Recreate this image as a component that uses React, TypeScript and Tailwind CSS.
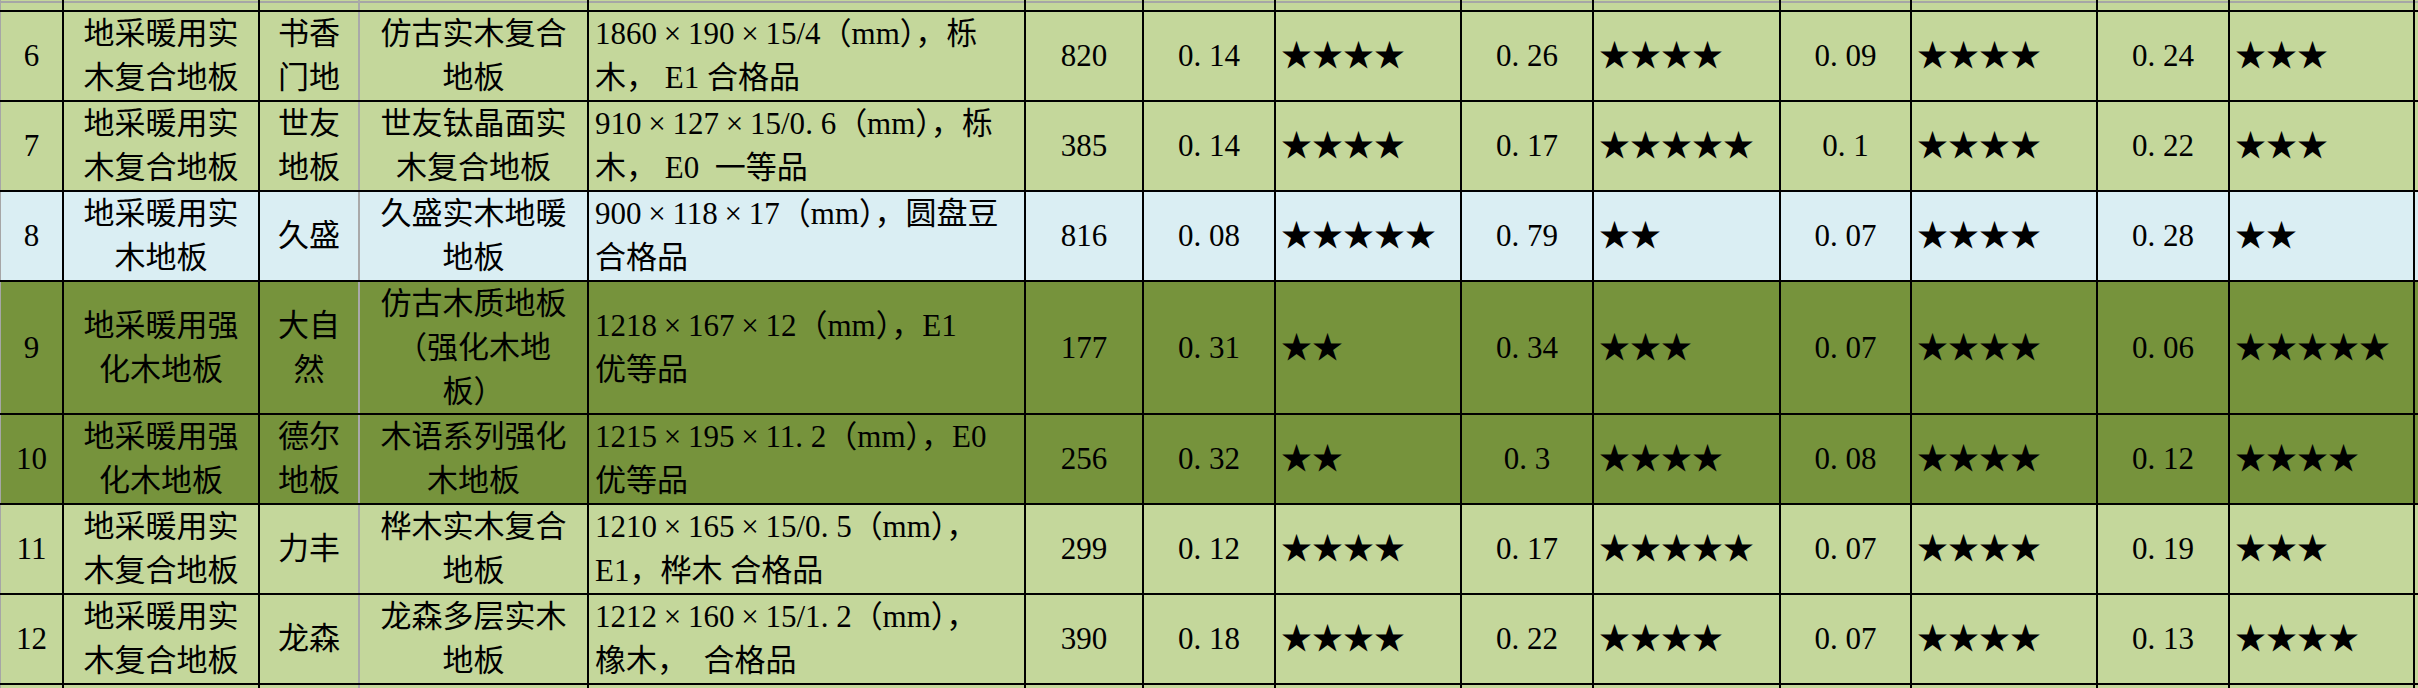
import React from 'react'

type Row = {
  bg: string
  h: string
  no: string
  cat: string[]
  brand: string[]
  name: string[]
  spec: string[]
  price: string
  vals: [string, number][]
}

// column widths include the 2px right rule
const COLS = [
  { w: 'w-[64px] border-l border-l-[#a6a6a6]', line: 'border-black', align: 'items-center text-center' },
  { w: 'w-[196px]', line: 'border-black', align: 'items-center text-center' },
  { w: 'w-[100px]', line: 'border-[#a9a9a9]', align: 'items-center text-center' },
  { w: 'w-[229px]', line: 'border-black', align: 'items-center text-center' },
  { w: 'w-[437px]', line: 'border-black', align: 'items-start pl-[6px]' },
  { w: 'w-[118px]', line: 'border-black', align: 'items-center text-center' },
  { w: 'w-[132px]', line: 'border-black', align: 'items-center text-center' },
  { w: 'w-[186px]', line: 'border-black', align: 'items-start pl-[5px]' },
  { w: 'w-[132px]', line: 'border-black', align: 'items-center text-center' },
  { w: 'w-[187px]', line: 'border-black', align: 'items-start pl-[5px]' },
  { w: 'w-[131px]', line: 'border-black', align: 'items-center text-center' },
  { w: 'w-[186px]', line: 'border-black', align: 'items-start pl-[5px]' },
  { w: 'w-[132px]', line: 'border-black', align: 'items-center text-center' },
  { w: 'w-[185px]', line: 'border-black', align: 'items-start pl-[5px]' },
]

const LIGHT = 'bg-[#c4d79b]'
const BLUE = 'bg-[#daeef3]'
const DARK = 'bg-[#76933c]'

const rows: Row[] = [
  {
    bg: LIGHT, h: 'h-[90px]', no: '6',
    cat: ['地采暖用实', '木复合地板'], brand: ['书香', '门地'], name: ['仿古实木复合', '地板'],
    spec: ['1860×190×15/4（mm），栎', '木， E1 合格品'], price: '820',
    vals: [['0.14', 4], ['0.26', 4], ['0.09', 4], ['0.24', 3]],
  },
  {
    bg: LIGHT, h: 'h-[90px]', no: '7',
    cat: ['地采暖用实', '木复合地板'], brand: ['世友', '地板'], name: ['世友钛晶面实', '木复合地板'],
    spec: ['910×127×15/0.6（mm），栎', '木， E0  一等品'], price: '385',
    vals: [['0.14', 4], ['0.17', 5], ['0.1', 4], ['0.22', 3]],
  },
  {
    bg: BLUE, h: 'h-[90px]', no: '8',
    cat: ['地采暖用实', '木地板'], brand: ['久盛'], name: ['久盛实木地暖', '地板'],
    spec: ['900×118×17（mm），圆盘豆', '合格品'], price: '816',
    vals: [['0.08', 5], ['0.79', 2], ['0.07', 4], ['0.28', 2]],
  },
  {
    bg: DARK, h: 'h-[133px]', no: '9',
    cat: ['地采暖用强', '化木地板'], brand: ['大自', '然'], name: ['仿古木质地板', '（强化木地', '板）'],
    spec: ['1218×167×12（mm），E1', '优等品'], price: '177',
    vals: [['0.31', 2], ['0.34', 3], ['0.07', 4], ['0.06', 5]],
  },
  {
    bg: DARK, h: 'h-[90px]', no: '10',
    cat: ['地采暖用强', '化木地板'], brand: ['德尔', '地板'], name: ['木语系列强化', '木地板'],
    spec: ['1215×195×11.2（mm），E0', '优等品'], price: '256',
    vals: [['0.32', 2], ['0.3', 4], ['0.08', 4], ['0.12', 4]],
  },
  {
    bg: LIGHT, h: 'h-[90px]', no: '11',
    cat: ['地采暖用实', '木复合地板'], brand: ['力丰'], name: ['桦木实木复合', '地板'],
    spec: ['1210×165×15/0.5（mm），', 'E1，桦木 合格品'], price: '299',
    vals: [['0.12', 4], ['0.17', 5], ['0.07', 4], ['0.19', 3]],
  },
  {
    bg: LIGHT, h: 'h-[90px]', no: '12',
    cat: ['地采暖用实', '木复合地板'], brand: ['龙森'], name: ['龙森多层实木', '地板'],
    spec: ['1212×160×15/1.2（mm），', '橡木，  合格品'], price: '390',
    vals: [['0.18', 4], ['0.22', 4], ['0.07', 4], ['0.13', 4]],
  },
]

// SimSun-like widths: full-width ×, half-width period
function Txt({ s }: { s: string }) {
  return (
    <>
      {s.split(/([×.])/).map((p, i) =>
        p === '×' ? (
          <span key={i} className="inline-block w-[1em] text-center">×</span>
        ) : p === '.' ? (
          <span key={i} className="inline-block w-[0.5em] text-left">.</span>
        ) : (
          p
        )
      )}
    </>
  )
}

function Cell({ col, lines }: { col: number; lines: string[] }) {
  const c = COLS[col]
  return (
    <div className={`${c.w} ${c.line} ${c.align} flex shrink-0 flex-col justify-center border-r-2`}>
      {lines.map((l, i) => (
        <div key={i} className="whitespace-pre leading-[44px]">
          <Txt s={l} />
        </div>
      ))}
    </div>
  )
}

function EmptyRow({ bg, h, rule }: { bg: string; h: string; rule?: boolean }) {
  return (
    <div className={`flex ${bg} ${h} border-b-2 border-black`}>
      {COLS.map((c, i) => (
        <div key={i} className={`${c.w} ${c.line} shrink-0 border-r-2`}>
          {rule && <div className="mt-px h-[2px] bg-[#a6a6a6]" />}
        </div>
      ))}
      <div className="min-w-0 flex-1">{rule && <div className="mt-px h-[2px] bg-[#a6a6a6]" />}</div>
    </div>
  )
}

export default function App() {
  return (
    <div className="h-[688px] overflow-hidden bg-[#c4d79b] font-['Liberation_Serif','Noto_Sans_CJK_SC',serif] text-[31px] text-black">
      <EmptyRow bg={LIGHT} h="h-[12px]" rule />
      {rows.map(r => (
        <div key={r.no} className={`flex ${r.bg} ${r.h} border-b-2 border-black`}>
          <Cell col={0} lines={[r.no]} />
          <Cell col={1} lines={r.cat} />
          <Cell col={2} lines={r.brand} />
          <Cell col={3} lines={r.name} />
          <Cell col={4} lines={r.spec} />
          <Cell col={5} lines={[r.price]} />
          {r.vals.map(([v, n], i) => (
            <React.Fragment key={i}>
              <Cell col={6 + i * 2} lines={[v]} />
              <Cell col={7 + i * 2} lines={['★'.repeat(n)]} />
            </React.Fragment>
          ))}
          <div className="min-w-0 flex-1" />
        </div>
      ))}
      <EmptyRow bg={LIGHT} h="h-[60px]" />
    </div>
  )
}
